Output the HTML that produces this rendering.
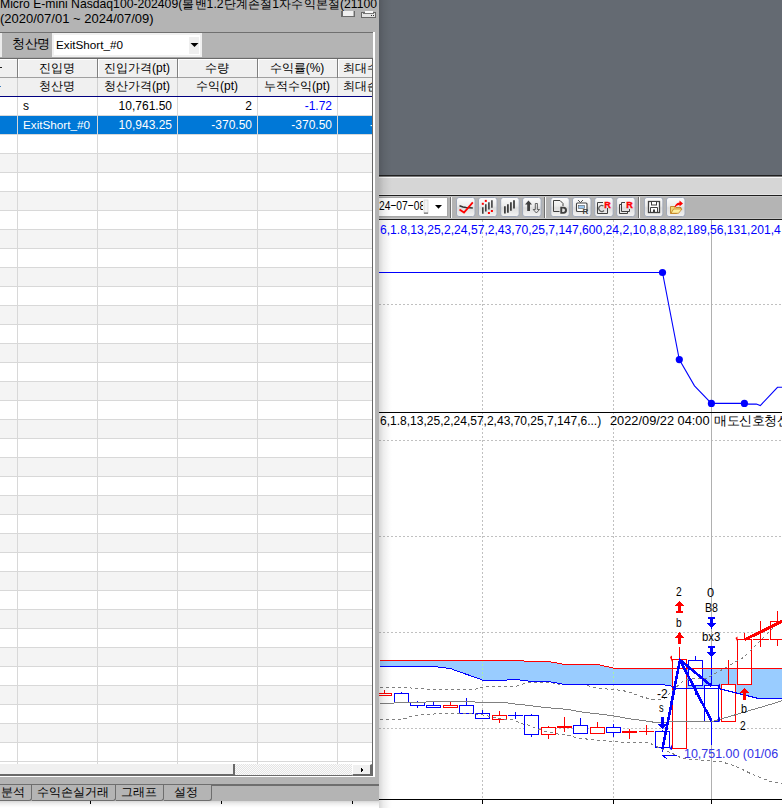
<!DOCTYPE html><html><head><meta charset="utf-8"><title>chart</title><style>
*{margin:0;padding:0;box-sizing:border-box}
html,body{width:782px;height:808px;overflow:hidden;background:#fff;font-family:"Liberation Sans",sans-serif;font-size:12px;color:#000}
#chart{position:absolute;left:0;top:0}
#win{position:absolute;left:0;top:0;width:379px;height:801px;background:#b4b4b4;overflow:hidden}
.t{position:absolute;white-space:nowrap;line-height:12px;height:12px}
.r{position:absolute}
.k{display:inline-block;width:1em;text-align:center}
</style></head><body>
<svg id="chart" width="782" height="808" viewBox="0 0 782 808"><rect x="379" y="0" width="403" height="175" fill="#646a72"/>
<rect x="379" y="175" width="403" height="1" fill="#202020"/>
<rect x="379" y="176" width="403" height="1" fill="#7a7a7a"/>
<rect x="379" y="177" width="403" height="1" fill="#f8f8f8"/>
<rect x="379" y="178" width="403" height="16" fill="#d6d6d6"/>
<rect x="379" y="194" width="403" height="1" fill="#e4e4e4"/>
<rect x="379" y="195" width="403" height="1" fill="#1e1e1e"/>
<rect x="379" y="196" width="403" height="1" fill="#c4c4c4"/>
<rect x="379" y="197" width="403" height="21" fill="#b4b4b4"/>
<rect x="379" y="218" width="403" height="1" fill="#c4c4c4"/>
<rect x="379" y="219" width="403" height="1" fill="#1e1e1e"/>
<rect x="379" y="220" width="403" height="588" fill="#ffffff"/>
<line x1="482.5" y1="220" x2="482.5" y2="799" stroke="#c0c0c0" stroke-width="1" stroke-dasharray="2,2" shape-rendering="crispEdges"/>
<line x1="613.5" y1="220" x2="613.5" y2="799" stroke="#c0c0c0" stroke-width="1" stroke-dasharray="2,2" shape-rendering="crispEdges"/>
<line x1="379" y1="304.5" x2="782" y2="304.5" stroke="#c0c0c0" stroke-width="1" stroke-dasharray="2,2" shape-rendering="crispEdges"/>
<line x1="379" y1="440.5" x2="782" y2="440.5" stroke="#c0c0c0" stroke-width="1" stroke-dasharray="2,2" shape-rendering="crispEdges"/>
<line x1="379" y1="536.5" x2="782" y2="536.5" stroke="#c0c0c0" stroke-width="1" stroke-dasharray="2,2" shape-rendering="crispEdges"/>
<line x1="379" y1="632.5" x2="782" y2="632.5" stroke="#c0c0c0" stroke-width="1" stroke-dasharray="2,2" shape-rendering="crispEdges"/>
<line x1="379" y1="728.5" x2="782" y2="728.5" stroke="#c0c0c0" stroke-width="1" stroke-dasharray="2,2" shape-rendering="crispEdges"/>
<line x1="711.5" y1="220" x2="711.5" y2="799" stroke="#b0b0b0" stroke-width="1" shape-rendering="crispEdges"/>
<rect x="379" y="412" width="403" height="1" fill="#000" shape-rendering="crispEdges"/>
<rect x="379" y="799" width="403" height="1" fill="#000" shape-rendering="crispEdges"/>
<rect x="90" y="800" width="1" height="4" fill="#000" shape-rendering="crispEdges"/>
<rect x="221" y="800" width="1" height="4" fill="#000" shape-rendering="crispEdges"/>
<rect x="352" y="800" width="1" height="4" fill="#000" shape-rendering="crispEdges"/>
<rect x="482" y="800" width="1" height="4" fill="#000" shape-rendering="crispEdges"/>
<rect x="613" y="800" width="1" height="4" fill="#000" shape-rendering="crispEdges"/>
<rect x="711" y="800" width="1" height="4" fill="#000" shape-rendering="crispEdges"/>
<polyline points="379,272.5 662.5,272.5 679.3,359.6 694.5,385.9 711.4,403.4 744.4,403.4 748.7,404.1 756.4,404.1 760.3,405.6 777.5,387.3 782,387.3" fill="none" stroke="#0000ff" stroke-width="1.1"/>
<circle cx="662.5" cy="272.5" r="3.6" fill="#0000ff"/>
<circle cx="679.3" cy="359.6" r="3.6" fill="#0000ff"/>
<circle cx="711.4" cy="403.4" r="3.6" fill="#0000ff"/>
<circle cx="744.4" cy="403.4" r="3.6" fill="#0000ff"/>
<polygon points="379.5,660.5 523.5,660.5 524.5,661.5 550.5,661.5 551.5,662.5 556.5,662.5 557.5,663.5 561.5,663.5 562.5,664.5 599.5,664.5 600.5,665.5 603.5,665.5 604.5,666.5 608.5,666.5 609.5,667.5 612.5,667.5 613.5,668.5 782.5,668.5 782.5,698.5 758.5,698.5 718.5,688.5 673.5,688.5 672.5,687.5 671.5,686.5 670.5,685.5 665.5,685.5 664.5,684.5 562.5,684.5 561.5,683.5 557.5,683.5 556.5,682.5 551.5,682.5 550.5,681.5 528.5,681.5 527.5,680.5 520.5,680.5 519.5,679.5 507.5,679.5 506.5,680.5 482.5,680.5 481.5,679.5 452.5,669.5 451.5,668.5 446.5,668.5 445.5,667.5 438.5,667.5 437.5,666.5 379.5,666.5" fill="#99ccff" shape-rendering="crispEdges"/>
<line x1="482.5" y1="661" x2="482.5" y2="680" stroke="#a8f0a8" stroke-width="1" stroke-dasharray="2,2" stroke-dashoffset="1" shape-rendering="crispEdges"/>
<line x1="613.5" y1="669" x2="613.5" y2="684" stroke="#a8f0a8" stroke-width="1" stroke-dasharray="2,2" stroke-dashoffset="1" shape-rendering="crispEdges"/>
<line x1="384.5" y1="690" x2="384.5" y2="693" stroke="#ff0000" stroke-width="1" shape-rendering="crispEdges"/>
<rect x="377.5" y="693.5" width="14" height="2" fill="#fff" stroke="#ff0000" stroke-width="1" shape-rendering="crispEdges"/>
<line x1="401.5" y1="692" x2="401.5" y2="693" stroke="#0000ff" stroke-width="1" shape-rendering="crispEdges"/>
<rect x="394.5" y="693.5" width="14" height="9" fill="#fff" stroke="#0000ff" stroke-width="1" shape-rendering="crispEdges"/>
<line x1="417.5" y1="701" x2="417.5" y2="702" stroke="#0000ff" stroke-width="1" shape-rendering="crispEdges"/>
<line x1="417.5" y1="706" x2="417.5" y2="708" stroke="#0000ff" stroke-width="1" shape-rendering="crispEdges"/>
<rect x="410.5" y="702.5" width="14" height="3" fill="#fff" stroke="#0000ff" stroke-width="1" shape-rendering="crispEdges"/>
<line x1="433.5" y1="701" x2="433.5" y2="705" stroke="#0000ff" stroke-width="1" shape-rendering="crispEdges"/>
<rect x="426.5" y="705.5" width="14" height="2" fill="#fff" stroke="#0000ff" stroke-width="1" shape-rendering="crispEdges"/>
<line x1="450.5" y1="701" x2="450.5" y2="705" stroke="#ff0000" stroke-width="1" shape-rendering="crispEdges"/>
<rect x="443.5" y="705.5" width="14" height="2" fill="#fff" stroke="#ff0000" stroke-width="1" shape-rendering="crispEdges"/>
<line x1="466.5" y1="698" x2="466.5" y2="705" stroke="#0000ff" stroke-width="1" shape-rendering="crispEdges"/>
<rect x="459.5" y="705.5" width="14" height="8" fill="#fff" stroke="#0000ff" stroke-width="1" shape-rendering="crispEdges"/>
<line x1="482.5" y1="710" x2="482.5" y2="713" stroke="#0000ff" stroke-width="1" shape-rendering="crispEdges"/>
<rect x="475.5" y="713.5" width="14" height="5" fill="#fff" stroke="#0000ff" stroke-width="1" shape-rendering="crispEdges"/>
<line x1="499.5" y1="711" x2="499.5" y2="715" stroke="#ff0000" stroke-width="1" shape-rendering="crispEdges"/>
<line x1="499.5" y1="720" x2="499.5" y2="723" stroke="#ff0000" stroke-width="1" shape-rendering="crispEdges"/>
<rect x="492.5" y="715.5" width="14" height="4" fill="#fff" stroke="#ff0000" stroke-width="1" shape-rendering="crispEdges"/>
<rect x="508" y="715" width="15" height="1" fill="#0000ff" shape-rendering="crispEdges"/>
<line x1="515.5" y1="712" x2="515.5" y2="719" stroke="#0000ff" stroke-width="1" shape-rendering="crispEdges"/>
<line x1="531.5" y1="714" x2="531.5" y2="715" stroke="#0000ff" stroke-width="1" shape-rendering="crispEdges"/>
<line x1="531.5" y1="735" x2="531.5" y2="737" stroke="#0000ff" stroke-width="1" shape-rendering="crispEdges"/>
<rect x="524.5" y="715.5" width="14" height="19" fill="#fff" stroke="#0000ff" stroke-width="1" shape-rendering="crispEdges"/>
<line x1="548.5" y1="726" x2="548.5" y2="727" stroke="#ff0000" stroke-width="1" shape-rendering="crispEdges"/>
<line x1="548.5" y1="735" x2="548.5" y2="739" stroke="#ff0000" stroke-width="1" shape-rendering="crispEdges"/>
<rect x="541.5" y="727.5" width="14" height="7" fill="#fff" stroke="#ff0000" stroke-width="1" shape-rendering="crispEdges"/>
<rect x="557" y="726" width="15" height="2" fill="#ff0000" shape-rendering="crispEdges"/>
<line x1="564.5" y1="717" x2="564.5" y2="732" stroke="#ff0000" stroke-width="1" shape-rendering="crispEdges"/>
<line x1="580.5" y1="718" x2="580.5" y2="725" stroke="#0000ff" stroke-width="1" shape-rendering="crispEdges"/>
<rect x="573.5" y="725.5" width="14" height="8" fill="#fff" stroke="#0000ff" stroke-width="1" shape-rendering="crispEdges"/>
<line x1="597.5" y1="722" x2="597.5" y2="727" stroke="#ff0000" stroke-width="1" shape-rendering="crispEdges"/>
<rect x="590.5" y="727.5" width="14" height="6" fill="#fff" stroke="#ff0000" stroke-width="1" shape-rendering="crispEdges"/>
<line x1="613.5" y1="724" x2="613.5" y2="727" stroke="#0000ff" stroke-width="1" shape-rendering="crispEdges"/>
<line x1="613.5" y1="733" x2="613.5" y2="737" stroke="#0000ff" stroke-width="1" shape-rendering="crispEdges"/>
<rect x="606.5" y="727.5" width="14" height="5" fill="#fff" stroke="#0000ff" stroke-width="1" shape-rendering="crispEdges"/>
<rect x="622" y="731" width="15" height="2" fill="#ff0000" shape-rendering="crispEdges"/>
<line x1="629.5" y1="729" x2="629.5" y2="739" stroke="#ff0000" stroke-width="1" shape-rendering="crispEdges"/>
<rect x="639" y="731" width="15" height="1" fill="#ff0000" shape-rendering="crispEdges"/>
<line x1="646.5" y1="725" x2="646.5" y2="735" stroke="#ff0000" stroke-width="1" shape-rendering="crispEdges"/>
<line x1="662.5" y1="730" x2="662.5" y2="731" stroke="#0000ff" stroke-width="1" shape-rendering="crispEdges"/>
<line x1="662.5" y1="748" x2="662.5" y2="752" stroke="#0000ff" stroke-width="1" shape-rendering="crispEdges"/>
<rect x="655.5" y="731.5" width="14" height="16" fill="#fff" stroke="#0000ff" stroke-width="1" shape-rendering="crispEdges"/>
<line x1="679.5" y1="647" x2="679.5" y2="659" stroke="#ff0000" stroke-width="1" shape-rendering="crispEdges"/>
<rect x="672.5" y="659.5" width="14" height="89" fill="#fff" stroke="#ff0000" stroke-width="1" shape-rendering="crispEdges"/>
<line x1="695.5" y1="656" x2="695.5" y2="660" stroke="#0000ff" stroke-width="1" shape-rendering="crispEdges"/>
<line x1="695.5" y1="686" x2="695.5" y2="695" stroke="#0000ff" stroke-width="1" shape-rendering="crispEdges"/>
<rect x="688.5" y="660.5" width="14" height="25" fill="#fff" stroke="#0000ff" stroke-width="1" shape-rendering="crispEdges"/>
<line x1="711.5" y1="658" x2="711.5" y2="685" stroke="#0000ff" stroke-width="1" shape-rendering="crispEdges"/>
<line x1="711.5" y1="722" x2="711.5" y2="745" stroke="#0000ff" stroke-width="1" shape-rendering="crispEdges"/>
<rect x="704.5" y="685.5" width="14" height="36" fill="#fff" stroke="#0000ff" stroke-width="1" shape-rendering="crispEdges"/>
<line x1="728.5" y1="660" x2="728.5" y2="684" stroke="#ff0000" stroke-width="1" shape-rendering="crispEdges"/>
<rect x="721.5" y="684.5" width="14" height="37" fill="#fff" stroke="#ff0000" stroke-width="1" shape-rendering="crispEdges"/>
<line x1="744.5" y1="633" x2="744.5" y2="639" stroke="#ff0000" stroke-width="1" shape-rendering="crispEdges"/>
<rect x="737.5" y="639.5" width="14" height="45" fill="#fff" stroke="#ff0000" stroke-width="1" shape-rendering="crispEdges"/>
<rect x="753" y="639" width="16" height="1" fill="#ff0000" shape-rendering="crispEdges"/>
<line x1="760.5" y1="621" x2="760.5" y2="647" stroke="#ff0000" stroke-width="1" shape-rendering="crispEdges"/>
<line x1="777.5" y1="611" x2="777.5" y2="621" stroke="#ff0000" stroke-width="1" shape-rendering="crispEdges"/>
<line x1="777.5" y1="640" x2="777.5" y2="646" stroke="#ff0000" stroke-width="1" shape-rendering="crispEdges"/>
<rect x="770.5" y="621.5" width="20" height="18" fill="#fff" stroke="#ff0000" stroke-width="1" shape-rendering="crispEdges"/>
<polyline points="379.5,687.5 410.5,687.5 411.5,688.5 425.5,688.5 426.5,689.5 474.5,689.5 480.5,687.5 485.5,686.5 515.5,686.5 520.5,684.5 530.5,682.5 550.5,682.5 560.5,684.5 583.5,684.5 590.5,686.5 600.5,688.5 613.5,689.5 622.5,690.5 630.5,692.5 640.5,696.5 652.5,699.5 663.5,699.5 672.5,690.5 683.5,680.5 690.5,678.5 706.5,678.5 743.5,657.5 782.5,618.5" fill="none" stroke="#808080" stroke-width="1" stroke-dasharray="3,3" shape-rendering="crispEdges"/>
<polyline points="379.5,703.5 393.5,703.5 394.5,702.5 425.5,702.5 426.5,701.5 474.5,701.5 475.5,702.5 507.5,702.5 508.5,703.5 520.5,704.5 528.5,705.5 536.5,706.5 544.5,707.5 557.5,708.5 567.5,709.5 573.5,710.5 578.5,711.5 585.5,712.5 593.5,713.5 603.5,714.5 610.5,715.5 616.5,716.5 622.5,717.5 627.5,718.5 634.5,719.5 642.5,720.5 649.5,721.5 655.5,722.5 665.5,722.5 671.5,721.5 712.5,721.5 773.5,703.5 782.5,700.5" fill="none" stroke="#808080" stroke-width="1" shape-rendering="crispEdges"/>
<polyline points="379.5,719.5 395.5,719.5 405.5,718.5 410.5,716.5 415.5,715.5 423.5,714.5 445.5,713.5 470.5,713.5 480.5,714.5 490.5,716.5 506.5,719.5 512.5,719.5 515.5,720.5 520.5,723.5 530.5,725.5 535.5,728.5 540.5,729.5 545.5,731.5 550.5,732.5 560.5,734.5 569.5,735.5 575.5,737.5 582.5,738.5 590.5,739.5 600.5,740.5 617.5,741.5 620.5,742.5 648.5,742.5 652.5,744.5 660.5,748.5 670.5,752.5 680.5,757.5 690.5,759.5 720.5,761.5 730.5,764.5 740.5,768.5 750.5,773.5 760.5,777.5 770.5,781.5 782.5,783.5" fill="none" stroke="#808080" stroke-width="1" stroke-dasharray="3,3" shape-rendering="crispEdges"/>
<polyline points="379.5,660.5 523.5,660.5 524.5,661.5 550.5,661.5 551.5,662.5 556.5,662.5 557.5,663.5 561.5,663.5 562.5,664.5 599.5,664.5 600.5,665.5 603.5,665.5 604.5,666.5 608.5,666.5 609.5,667.5 612.5,667.5 613.5,668.5 782.5,668.5" fill="none" stroke="#ff0000" stroke-width="1" shape-rendering="crispEdges"/>
<polyline points="379.5,666.5 437.5,666.5 438.5,667.5 445.5,667.5 446.5,668.5 451.5,668.5 452.5,669.5 481.5,679.5 482.5,680.5 506.5,680.5 507.5,679.5 519.5,679.5 520.5,680.5 527.5,680.5 528.5,681.5 550.5,681.5 551.5,682.5 556.5,682.5 557.5,683.5 561.5,683.5 562.5,684.5 664.5,684.5 665.5,685.5 670.5,685.5 671.5,686.5 672.5,687.5 673.5,688.5 718.5,688.5 758.5,698.5 782.5,698.5" fill="none" stroke="#0000ff" stroke-width="1" shape-rendering="crispEdges"/>
<polyline points="662.5,749 680,660 711.5,686" fill="none" stroke="#0000ff" stroke-width="2.6" stroke-linejoin="miter" shape-rendering="crispEdges"/>
<line x1="680" y1="660" x2="711.5" y2="721" stroke="#0000ff" stroke-width="2.6" shape-rendering="crispEdges"/>
<line x1="745" y1="639.5" x2="790" y2="617.5" stroke="#ff0000" stroke-width="3" shape-rendering="crispEdges"/>
<polygon points="675,606 679.5,601 684,606" fill="#ff0000" shape-rendering="crispEdges"/>
<rect x="678" y="606" width="3" height="7" fill="#ff0000" shape-rendering="crispEdges"/>
<rect x="676" y="611" width="7" height="2" fill="#ff0000" shape-rendering="crispEdges"/>
<polygon points="675,638 679.5,632 684,638" fill="#ff0000" shape-rendering="crispEdges"/>
<rect x="678" y="638" width="3" height="6" fill="#ff0000" shape-rendering="crispEdges"/>
<polygon points="707,623 711.5,628.6 716,623" fill="#0000ff" shape-rendering="crispEdges"/>
<rect x="710" y="617" width="3" height="6" fill="#0000ff" shape-rendering="crispEdges"/>
<rect x="708" y="617" width="7" height="2" fill="#0000ff" shape-rendering="crispEdges"/>
<polygon points="707,652 711.5,657.7 716,652" fill="#0000ff" shape-rendering="crispEdges"/>
<rect x="710" y="646" width="3" height="6" fill="#0000ff" shape-rendering="crispEdges"/>
<rect x="708" y="646" width="7" height="2" fill="#0000ff" shape-rendering="crispEdges"/>
<polygon points="658,724 662.5,729 667,724" fill="#0000ff" shape-rendering="crispEdges"/>
<rect x="661" y="717" width="3" height="7" fill="#0000ff" shape-rendering="crispEdges"/>
<polygon points="740,693 744.5,688 749,693" fill="#ff0000" shape-rendering="crispEdges"/>
<rect x="743" y="693" width="3" height="7" fill="#ff0000" shape-rendering="crispEdges"/>
<polygon points="670,657 672,655.5 672,662" fill="#ff0000"/>
<polygon points="735.5,638 737.5,636.5 737.5,642" fill="#ff0000"/>
<polygon points="669.5,749 672,744.5 672,750" fill="#0000ff"/>
<polygon points="717.5,686 720,683.5 720,689" fill="#0000ff"/>
<polygon points="717.5,720 720,716.5 720,722" fill="#0000ff"/>
<rect x="662" y="755" width="15" height="1" fill="#0000ff" shape-rendering="crispEdges"/>
<line x1="662.5" y1="755.5" x2="667" y2="759" stroke="#0000ff" stroke-width="1" shape-rendering="crispEdges"/>
<defs><linearGradient id="bg1" x1="0" y1="0" x2="0" y2="1"><stop offset="0" stop-color="#fdfdfd"/><stop offset="0.45" stop-color="#ececec"/><stop offset="0.55" stop-color="#dedede"/><stop offset="1" stop-color="#f4f4f4"/></linearGradient></defs>
<rect x="378.5" y="197.5" width="69" height="19" fill="#fff" stroke="#a8a8a8" stroke-width="1"/>
<rect x="424" y="200" width="4" height="13.5" fill="#f4f4f4" stroke="#c8c8c8" stroke-width="0.6"/>
<rect x="424" y="212.5" width="4" height="1.2" fill="#707070"/>
<polygon points="435,205 442,205 438.5,208.8" fill="#000"/>
<rect x="450" y="197" width="1" height="21" fill="#707070" shape-rendering="crispEdges"/><rect x="451" y="197" width="1" height="21" fill="#f8f8f8" shape-rendering="crispEdges"/>
<rect x="544" y="197" width="1" height="21" fill="#707070" shape-rendering="crispEdges"/><rect x="545" y="197" width="1" height="21" fill="#f8f8f8" shape-rendering="crispEdges"/>
<rect x="638" y="197" width="1" height="21" fill="#707070" shape-rendering="crispEdges"/><rect x="639" y="197" width="1" height="21" fill="#f8f8f8" shape-rendering="crispEdges"/>
<rect x="456.5" y="197.5" width="18.5" height="19" rx="2.5" fill="url(#bg1)" stroke="#a0a8b8" stroke-width="1"/>
<rect x="478.5" y="197.5" width="18.5" height="19" rx="2.5" fill="url(#bg1)" stroke="#a0a8b8" stroke-width="1"/>
<rect x="500.7" y="197.5" width="18.5" height="19" rx="2.5" fill="url(#bg1)" stroke="#a0a8b8" stroke-width="1"/>
<rect x="522.6" y="197.5" width="18.5" height="19" rx="2.5" fill="url(#bg1)" stroke="#a0a8b8" stroke-width="1"/>
<rect x="550.8" y="197.5" width="18.5" height="19" rx="2.5" fill="url(#bg1)" stroke="#a0a8b8" stroke-width="1"/>
<rect x="572.5" y="197.5" width="18.5" height="19" rx="2.5" fill="url(#bg1)" stroke="#a0a8b8" stroke-width="1"/>
<rect x="594.7" y="197.5" width="18.5" height="19" rx="2.5" fill="url(#bg1)" stroke="#a0a8b8" stroke-width="1"/>
<rect x="616.6" y="197.5" width="18.5" height="19" rx="2.5" fill="url(#bg1)" stroke="#a0a8b8" stroke-width="1"/>
<rect x="644.4" y="197.5" width="18.5" height="19" rx="2.5" fill="url(#bg1)" stroke="#a0a8b8" stroke-width="1"/>
<rect x="666.5" y="197.5" width="18.5" height="19" rx="2.5" fill="url(#bg1)" stroke="#a0a8b8" stroke-width="1"/>
<polyline points="459.5,205.8 463,207 466,207.5 472.8,208" fill="none" stroke="#333" stroke-width="1.6"/>
<polyline points="459.5,209.5 464,212.5 472.8,202.3" fill="none" stroke="#ff0000" stroke-width="1.8"/>
<line x1="482.8" y1="207.2" x2="482.8" y2="213.7" stroke="#404040" stroke-width="1.6"/>
<line x1="485.8" y1="204.3" x2="485.8" y2="211.5" stroke="#404040" stroke-width="1.6"/>
<line x1="488.9" y1="202.2" x2="488.9" y2="209.6" stroke="#404040" stroke-width="1.6"/>
<line x1="491.9" y1="200.2" x2="491.9" y2="207.8" stroke="#404040" stroke-width="1.6"/>
<rect x="481.8" y="202.8" width="2" height="2" fill="#ff0000"/>
<rect x="484.8" y="199.9" width="2" height="2" fill="#ff0000"/>
<rect x="487.9" y="212" width="2" height="2" fill="#ff0000"/>
<rect x="490.9" y="210" width="2" height="2" fill="#ff0000"/>
<line x1="504.9" y1="206.3" x2="504.9" y2="213.6" stroke="#404040" stroke-width="1.8"/>
<line x1="507.9" y1="204.2" x2="507.9" y2="212.8" stroke="#404040" stroke-width="1.8"/>
<line x1="510.9" y1="202.2" x2="510.9" y2="210.8" stroke="#404040" stroke-width="1.8"/>
<line x1="514" y1="200.2" x2="514" y2="208.5" stroke="#404040" stroke-width="1.8"/>
<polygon points="525,204.5 528.5,200.5 532,204.5 530,204.5 530,211 527.2,211 527.2,204.5" fill="#404040"/>
<polygon points="535.3,203.5 537.4,203.5 537.4,209.5 539.5,209.5 536.4,213 533.2,209.5 535.3,209.5" fill="none" stroke="#404040" stroke-width="0.8"/>
<path d="M553.5,200.5 H560 L563,203.5 V206 M553.5,200.5 V211.5 H559.5" fill="none" stroke="#404040" stroke-width="1"/>
<path d="M560.3,206.8 H563.5 Q567,207 567,210.3 Q567,213.6 563.5,213.7 H560.3 Z M562.2,208.6 V211.9 H563.3 Q565,211.8 565,210.3 Q565,208.7 563.3,208.6 Z" fill="#404040" fill-rule="evenodd"/>
<line x1="578" y1="200" x2="580.5" y2="202.5" stroke="#404040" stroke-width="0.9"/><line x1="583" y1="200" x2="580.5" y2="202.5" stroke="#404040" stroke-width="0.9"/>
<rect x="576.5" y="203" width="10.5" height="8.5" rx="1" fill="#fff" stroke="#404040" stroke-width="1.1"/>
<rect x="578.5" y="205.5" width="6" height="3" fill="#9cc8f0" stroke="#404040" stroke-width="0.5"/>
<text x="582.5" y="213.8" font-family="Liberation Sans" font-weight="bold" font-size="8" fill="#404040">R</text>
<path d="M603,202.5 H597.5 V213.5 H607.5 V208" fill="none" stroke="#404040" stroke-width="1"/>
<path d="M603.5,206 A3,3 0 1 0 604,210.5" fill="none" stroke="#606060" stroke-width="1.2"/>
<text x="604.3" y="207.8" font-family="Liberation Sans" font-weight="bold" font-size="9" fill="#ff0000" stroke="#ff0000" stroke-width="0.4">R</text>
<path d="M625,202.5 H621.5 V211.5 H629.5 V209" fill="none" stroke="#404040" stroke-width="1"/>
<path d="M621.5,204.5 H619.5 V213.5 H627.5 V211.5" fill="none" stroke="#404040" stroke-width="1"/>
<text x="626.3" y="207.8" font-family="Liberation Sans" font-weight="bold" font-size="9" fill="#ff0000" stroke="#ff0000" stroke-width="0.4">R</text>
<rect x="648.5" y="201.5" width="11" height="11" fill="#fff" stroke="#404040" stroke-width="1.3"/>
<rect x="651.5" y="201.5" width="5" height="3.5" fill="#fff" stroke="#404040" stroke-width="1"/>
<path d="M650.5,212.5 V207.5 H657.5 V212.5" fill="none" stroke="#404040" stroke-width="1"/>
<rect x="653" y="209.5" width="2" height="3" fill="#404040"/>
<path d="M670.5,206.5 H675 L676,207.5 H681 V209 L676.5,213.5 H670.5 Z" fill="#f0d878" stroke="#c08020" stroke-width="0.9"/>
<path d="M671,213.3 L673.5,209 H682 L678.5,213.3 Z" fill="#fff0a0" stroke="#c08020" stroke-width="0.8"/>
<path d="M674.5,208 Q675,203 679.5,202.5 V200.5 L683,203.5 L679.5,206.5 V204.8 Q676.5,205 674.5,208 Z" fill="#ff0000"/></svg>
<div class="r" style="left:0;top:801px;width:379px;height:7px;background:linear-gradient(to bottom,rgba(0,0,0,0.16),rgba(0,0,0,0.07) 35%,rgba(0,0,0,0.02) 75%,rgba(0,0,0,0))"></div>
<div class="r" style="left:379px;top:0;width:13px;height:808px;background:linear-gradient(to right,rgba(0,0,0,0.16),rgba(0,0,0,0.07) 35%,rgba(0,0,0,0.02) 75%,rgba(0,0,0,0))"></div>
<div class="r" style="left:379px;top:197px;width:44px;height:19px;overflow:hidden"><div class="t" style="left:-0.30px;top:2.12px;font-size:13.5px;line-height:13.5px;height:13.5px;color:#000;transform:scaleX(0.7576);transform-origin:0 0;">24−07−08</div></div>
<div class="t" style="left:379.80px;top:223.67px;font-size:12.5px;line-height:12.5px;height:12.5px;color:#0000ff;transform:scaleX(0.9690);transform-origin:0 0;">6,1.8,13,25,2,24,57,2,43,70,25,7,147,600,24,2,10,8,8,82,189,56,131,201,4</div>
<div class="t" style="left:380.00px;top:415.07px;font-size:12.5px;line-height:12.5px;height:12.5px;color:#000;transform:scaleX(0.9615);transform-origin:0 0;">6,1.8,13,25,2,24,57,2,43,70,25,7,147,6...)</div>
<div class="t" style="left:610.40px;top:415.07px;font-size:12.5px;line-height:12.5px;height:12.5px;color:#000;transform:scaleX(1.0235);transform-origin:0 0;">2022/09/22 04:00</div>
<div class="t" style="left:714.00px;top:415.07px;font-size:12.5px;line-height:12.5px;height:12.5px;color:#000;"><span class="k">매</span><span class="k">도</span><span class="k">신</span><span class="k">호</span><span class="k">청</span><span class="k">산</span></div>
<div class="t" style="left:675.60px;top:586.07px;font-size:12.5px;line-height:12.5px;height:12.5px;color:#000;transform:scaleX(0.8216);transform-origin:0 0;">2</div>
<div class="t" style="left:706.90px;top:587.17px;font-size:12.5px;line-height:12.5px;height:12.5px;color:#000;transform:scaleX(1.0234);transform-origin:0 0;">0</div>
<div class="t" style="left:704.80px;top:602.27px;font-size:12.5px;line-height:12.5px;height:12.5px;color:#000;transform:scaleX(0.8490);transform-origin:0 0;">B8</div>
<div class="t" style="left:675.70px;top:616.88px;font-size:12.5px;line-height:12.5px;height:12.5px;color:#000;transform:scaleX(0.8072);transform-origin:0 0;">b</div>
<div class="t" style="left:701.80px;top:630.68px;font-size:12.5px;line-height:12.5px;height:12.5px;color:#000;transform:scaleX(0.9143);transform-origin:0 0;">bx3</div>
<div class="t" style="left:656.90px;top:687.57px;font-size:12.5px;line-height:12.5px;height:12.5px;color:#000;transform:scaleX(0.9618);transform-origin:0 0;">-2</div>
<div class="t" style="left:659.40px;top:702.41px;font-size:12.5px;line-height:12.5px;height:12.5px;color:#000;transform:scaleX(0.7360);transform-origin:0 0;">s</div>
<div class="t" style="left:740.50px;top:702.68px;font-size:12.5px;line-height:12.5px;height:12.5px;color:#000;transform:scaleX(0.8649);transform-origin:0 0;">b</div>
<div class="t" style="left:740.40px;top:720.17px;font-size:12.5px;line-height:12.5px;height:12.5px;color:#000;transform:scaleX(0.8216);transform-origin:0 0;">2</div>
<div class="t" style="left:683.50px;top:748.44px;font-size:12.5px;line-height:12.5px;height:12.5px;color:#3232e6;transform:scaleX(0.9958);transform-origin:0 0;">10,751.00 (01/06</div>
<div id="win"><div class="t" style="left:0px;top:-1.9px;font-size:12.2px;color:#000;">Micro E-mini Nasdaq100-202409(<span class="k">볼</span><span class="k">밴</span>1.2<span class="k">단</span><span class="k">계</span><span class="k">손</span><span class="k">절</span>1<span class="k">자</span><span class="k">수</span><span class="k">익</span><span class="k">본</span><span class="k">절</span>(21100</div>
<div class="t" style="left:0px;top:13px;font-size:13px;color:#000;">(2020/07/01 ~ 2024/07/09)</div>
<svg class="r" style="left:338px;top:8px" width="42" height="14" viewBox="338 8 42 14" shape-rendering="crispEdges"><rect x="341" y="11" width="1.5" height="5.5" fill="#6a6a6a"/><rect x="353.5" y="11" width="1.5" height="5.5" fill="#6a6a6a"/><rect x="343" y="10.8" width="10" height="5.7" fill="#f0f0f0"/><rect x="342" y="16" width="12" height="1" fill="#6a6a6a"/><rect x="361.5" y="12.5" width="14" height="5" rx="1" fill="#e4e4e4" stroke="#666" stroke-width="1"/><rect x="364.5" y="10.8" width="8" height="2.2" fill="#f8f8f8"/><rect x="363" y="13" width="11" height="1" fill="#777"/><rect x="371" y="15" width="1.2" height="1.2" fill="#333"/><rect x="373" y="15" width="1.2" height="1.2" fill="#333"/></svg>
<div class="r" style="left:0px;top:32px;width:374px;height:1px;background:#707070;"></div>
<div class="r" style="left:373px;top:32px;width:2px;height:745px;background:#ffffff;"></div>
<div class="r" style="left:372px;top:58px;width:1px;height:718px;background:#666666;"></div>
<div class="r" style="left:0px;top:776px;width:375px;height:1px;background:#ffffff;"></div>
<div class="r" style="left:0px;top:33px;width:2px;height:24px;background:#ececec;"></div>
<div class="t" style="left:12px;top:37.5px;font-size:12.5px;color:#000;"><span class="k">청</span><span class="k">산</span><span class="k">명</span></div>
<div class="r" style="left:52px;top:33px;width:150px;height:24px;background:#ffffff;border:2px solid #f0f0f0"></div>
<div class="t" style="left:56px;top:38.5px;font-size:11.7px;color:#000;">ExitShort_#0</div>
<div class="r" style="left:189px;top:37px;width:10px;height:17px;background:#efefef;"></div>
<svg class="r" style="left:190px;top:42px" width="9" height="6"><polygon points="0.5,1 8.5,1 4.5,5" fill="#000"/></svg>
<div class="r" style="left:0px;top:57px;width:373px;height:1px;background:#a8a8a8;"></div>
<div class="r" style="left:0px;top:58px;width:372px;height:705px;background:#ffffff;"></div>
<div class="r" style="left:0px;top:58px;width:372px;height:1px;background:#6a6a6a;"></div>
<div class="r" style="left:0px;top:59px;width:372px;height:1px;background:#ffffff;"></div>
<div class="r" style="left:0px;top:60px;width:372px;height:17px;background:#f0f0f0;"></div>
<div class="r" style="left:0px;top:77px;width:372px;height:1px;background:#a0a0a0;"></div>
<div class="r" style="left:0px;top:78px;width:372px;height:18px;background:#f0f0f0;"></div>
<div class="r" style="left:17px;top:59px;width:1px;height:19px;background:#808080;"></div>
<div class="r" style="left:18px;top:59px;width:1px;height:18px;background:#ffffff;"></div>
<div class="r" style="left:17px;top:78px;width:1px;height:18px;background:#d0d0d0;"></div>
<div class="r" style="left:97px;top:59px;width:1px;height:19px;background:#808080;"></div>
<div class="r" style="left:98px;top:59px;width:1px;height:18px;background:#ffffff;"></div>
<div class="r" style="left:97px;top:78px;width:1px;height:18px;background:#d0d0d0;"></div>
<div class="r" style="left:177px;top:59px;width:1px;height:19px;background:#808080;"></div>
<div class="r" style="left:178px;top:59px;width:1px;height:18px;background:#ffffff;"></div>
<div class="r" style="left:177px;top:78px;width:1px;height:18px;background:#d0d0d0;"></div>
<div class="r" style="left:257px;top:59px;width:1px;height:19px;background:#808080;"></div>
<div class="r" style="left:258px;top:59px;width:1px;height:18px;background:#ffffff;"></div>
<div class="r" style="left:257px;top:78px;width:1px;height:18px;background:#d0d0d0;"></div>
<div class="r" style="left:337px;top:59px;width:1px;height:19px;background:#808080;"></div>
<div class="r" style="left:338px;top:59px;width:1px;height:18px;background:#ffffff;"></div>
<div class="r" style="left:337px;top:78px;width:1px;height:18px;background:#d0d0d0;"></div>
<div class="r" style="left:0px;top:96px;width:372px;height:1px;background:#000080;"></div>
<div class="r" style="left:0px;top:97px;width:372px;height:18px;background:#ffffff;"></div>
<div class="r" style="left:0px;top:115px;width:372px;height:1px;background:#d8d8d8;"></div>
<div class="r" style="left:0px;top:116px;width:372px;height:18px;background:#0078d7;"></div>
<div class="r" style="left:0px;top:134px;width:372px;height:1px;background:#d8d8d8;"></div>
<div class="r" style="left:0px;top:135px;width:372px;height:18px;background:#ffffff;"></div>
<div class="r" style="left:0px;top:153px;width:372px;height:1px;background:#d8d8d8;"></div>
<div class="r" style="left:0px;top:154px;width:372px;height:18px;background:#f4f4f4;"></div>
<div class="r" style="left:0px;top:172px;width:372px;height:1px;background:#d8d8d8;"></div>
<div class="r" style="left:0px;top:173px;width:372px;height:18px;background:#ffffff;"></div>
<div class="r" style="left:0px;top:191px;width:372px;height:1px;background:#d8d8d8;"></div>
<div class="r" style="left:0px;top:192px;width:372px;height:18px;background:#f4f4f4;"></div>
<div class="r" style="left:0px;top:210px;width:372px;height:1px;background:#d8d8d8;"></div>
<div class="r" style="left:0px;top:211px;width:372px;height:18px;background:#ffffff;"></div>
<div class="r" style="left:0px;top:229px;width:372px;height:1px;background:#d8d8d8;"></div>
<div class="r" style="left:0px;top:230px;width:372px;height:18px;background:#f4f4f4;"></div>
<div class="r" style="left:0px;top:248px;width:372px;height:1px;background:#d8d8d8;"></div>
<div class="r" style="left:0px;top:249px;width:372px;height:18px;background:#ffffff;"></div>
<div class="r" style="left:0px;top:267px;width:372px;height:1px;background:#d8d8d8;"></div>
<div class="r" style="left:0px;top:268px;width:372px;height:18px;background:#f4f4f4;"></div>
<div class="r" style="left:0px;top:286px;width:372px;height:1px;background:#d8d8d8;"></div>
<div class="r" style="left:0px;top:287px;width:372px;height:18px;background:#ffffff;"></div>
<div class="r" style="left:0px;top:305px;width:372px;height:1px;background:#d8d8d8;"></div>
<div class="r" style="left:0px;top:306px;width:372px;height:18px;background:#f4f4f4;"></div>
<div class="r" style="left:0px;top:324px;width:372px;height:1px;background:#d8d8d8;"></div>
<div class="r" style="left:0px;top:325px;width:372px;height:18px;background:#ffffff;"></div>
<div class="r" style="left:0px;top:343px;width:372px;height:1px;background:#d8d8d8;"></div>
<div class="r" style="left:0px;top:344px;width:372px;height:18px;background:#f4f4f4;"></div>
<div class="r" style="left:0px;top:362px;width:372px;height:1px;background:#d8d8d8;"></div>
<div class="r" style="left:0px;top:363px;width:372px;height:18px;background:#ffffff;"></div>
<div class="r" style="left:0px;top:381px;width:372px;height:1px;background:#d8d8d8;"></div>
<div class="r" style="left:0px;top:382px;width:372px;height:18px;background:#f4f4f4;"></div>
<div class="r" style="left:0px;top:400px;width:372px;height:1px;background:#d8d8d8;"></div>
<div class="r" style="left:0px;top:401px;width:372px;height:18px;background:#ffffff;"></div>
<div class="r" style="left:0px;top:419px;width:372px;height:1px;background:#d8d8d8;"></div>
<div class="r" style="left:0px;top:420px;width:372px;height:18px;background:#f4f4f4;"></div>
<div class="r" style="left:0px;top:438px;width:372px;height:1px;background:#d8d8d8;"></div>
<div class="r" style="left:0px;top:439px;width:372px;height:18px;background:#ffffff;"></div>
<div class="r" style="left:0px;top:457px;width:372px;height:1px;background:#d8d8d8;"></div>
<div class="r" style="left:0px;top:458px;width:372px;height:18px;background:#f4f4f4;"></div>
<div class="r" style="left:0px;top:476px;width:372px;height:1px;background:#d8d8d8;"></div>
<div class="r" style="left:0px;top:477px;width:372px;height:18px;background:#ffffff;"></div>
<div class="r" style="left:0px;top:495px;width:372px;height:1px;background:#d8d8d8;"></div>
<div class="r" style="left:0px;top:496px;width:372px;height:18px;background:#f4f4f4;"></div>
<div class="r" style="left:0px;top:514px;width:372px;height:1px;background:#d8d8d8;"></div>
<div class="r" style="left:0px;top:515px;width:372px;height:18px;background:#ffffff;"></div>
<div class="r" style="left:0px;top:533px;width:372px;height:1px;background:#d8d8d8;"></div>
<div class="r" style="left:0px;top:534px;width:372px;height:18px;background:#f4f4f4;"></div>
<div class="r" style="left:0px;top:552px;width:372px;height:1px;background:#d8d8d8;"></div>
<div class="r" style="left:0px;top:553px;width:372px;height:18px;background:#ffffff;"></div>
<div class="r" style="left:0px;top:571px;width:372px;height:1px;background:#d8d8d8;"></div>
<div class="r" style="left:0px;top:572px;width:372px;height:18px;background:#f4f4f4;"></div>
<div class="r" style="left:0px;top:590px;width:372px;height:1px;background:#d8d8d8;"></div>
<div class="r" style="left:0px;top:591px;width:372px;height:18px;background:#ffffff;"></div>
<div class="r" style="left:0px;top:609px;width:372px;height:1px;background:#d8d8d8;"></div>
<div class="r" style="left:0px;top:610px;width:372px;height:18px;background:#f4f4f4;"></div>
<div class="r" style="left:0px;top:628px;width:372px;height:1px;background:#d8d8d8;"></div>
<div class="r" style="left:0px;top:629px;width:372px;height:18px;background:#ffffff;"></div>
<div class="r" style="left:0px;top:647px;width:372px;height:1px;background:#d8d8d8;"></div>
<div class="r" style="left:0px;top:648px;width:372px;height:18px;background:#f4f4f4;"></div>
<div class="r" style="left:0px;top:666px;width:372px;height:1px;background:#d8d8d8;"></div>
<div class="r" style="left:0px;top:667px;width:372px;height:18px;background:#ffffff;"></div>
<div class="r" style="left:0px;top:685px;width:372px;height:1px;background:#d8d8d8;"></div>
<div class="r" style="left:0px;top:686px;width:372px;height:18px;background:#f4f4f4;"></div>
<div class="r" style="left:0px;top:704px;width:372px;height:1px;background:#d8d8d8;"></div>
<div class="r" style="left:0px;top:705px;width:372px;height:18px;background:#ffffff;"></div>
<div class="r" style="left:0px;top:723px;width:372px;height:1px;background:#d8d8d8;"></div>
<div class="r" style="left:0px;top:724px;width:372px;height:18px;background:#f4f4f4;"></div>
<div class="r" style="left:0px;top:742px;width:372px;height:1px;background:#d8d8d8;"></div>
<div class="r" style="left:0px;top:743px;width:372px;height:18px;background:#ffffff;"></div>
<div class="r" style="left:0px;top:761px;width:372px;height:1px;background:#d8d8d8;"></div>
<div class="r" style="left:17px;top:97px;width:1px;height:666px;background:#d8d8d8;"></div>
<div class="r" style="left:97px;top:97px;width:1px;height:666px;background:#d8d8d8;"></div>
<div class="r" style="left:177px;top:97px;width:1px;height:666px;background:#d8d8d8;"></div>
<div class="r" style="left:257px;top:97px;width:1px;height:666px;background:#d8d8d8;"></div>
<div class="r" style="left:337px;top:97px;width:1px;height:666px;background:#d8d8d8;"></div>
<div class="t" style="left:17px;top:62px;width:80px;text-align:center;font-size:12px"><span class="k">진</span><span class="k">입</span><span class="k">명</span></div>
<div class="t" style="left:17px;top:80px;width:80px;text-align:center;font-size:12px"><span class="k">청</span><span class="k">산</span><span class="k">명</span></div>
<div class="t" style="left:97px;top:62px;width:80px;text-align:center;font-size:12px"><span class="k">진</span><span class="k">입</span><span class="k">가</span><span class="k">격</span>(pt)</div>
<div class="t" style="left:97px;top:80px;width:80px;text-align:center;font-size:12px"><span class="k">청</span><span class="k">산</span><span class="k">가</span><span class="k">격</span>(pt)</div>
<div class="t" style="left:177px;top:62px;width:80px;text-align:center;font-size:12px"><span class="k">수</span><span class="k">량</span></div>
<div class="t" style="left:177px;top:80px;width:80px;text-align:center;font-size:12px"><span class="k">수</span><span class="k">익</span>(pt)</div>
<div class="t" style="left:257px;top:62px;width:80px;text-align:center;font-size:12px"><span class="k">수</span><span class="k">익</span><span class="k">률</span>(%)</div>
<div class="t" style="left:257px;top:80px;width:80px;text-align:center;font-size:12px"><span class="k">누</span><span class="k">적</span><span class="k">수</span><span class="k">익</span>(pt)</div>
<div class="r" style="left:338px;top:59px;width:34px;height:40px;overflow:hidden"><div class="t" style="left:5px;top:3px;font-size:12px"><span class="k">최</span><span class="k">대</span><span class="k">수</span></div><div class="t" style="left:5px;top:21px;font-size:12px"><span class="k">최</span><span class="k">대</span><span class="k">손</span></div></div>
<div class="r" style="left:0px;top:67px;width:2px;height:1px;background:#202020;"></div>
<div class="r" style="left:0px;top:86px;width:1px;height:1px;background:#4080c0;"></div>
<div class="t" style="left:23px;top:100px;font-size:12px;color:#000;">s</div>
<div class="t" style="right:207px;top:100px;font-size:12px;color:#000;text-align:right;">10,761.50</div>
<div class="t" style="right:127px;top:100px;font-size:12px;color:#000;text-align:right;">2</div>
<div class="t" style="right:47px;top:100px;font-size:12px;color:#0000ff;text-align:right;">-1.72</div>
<div class="t" style="left:23px;top:119px;font-size:11.7px;color:#fff;">ExitShort_#0</div>
<div class="t" style="right:207px;top:119px;font-size:12px;color:#fff;text-align:right;">10,943.25</div>
<div class="t" style="right:127px;top:119px;font-size:12px;color:#fff;text-align:right;">-370.50</div>
<div class="t" style="right:47px;top:119px;font-size:12px;color:#fff;text-align:right;">-370.50</div>
<div class="r" style="left:338px;top:116px;width:34px;height:18px;overflow:hidden"><div class="t" style="left:32px;top:3px;font-size:12px;color:#fff">-</div></div>
<div class="r" style="left:0px;top:762px;width:372px;height:2px;background:#ffffff;"></div>
<div class="r" style="left:17px;top:762px;width:1px;height:2px;background:#d8d8d8;"></div>
<div class="r" style="left:97px;top:762px;width:1px;height:2px;background:#d8d8d8;"></div>
<div class="r" style="left:177px;top:762px;width:1px;height:2px;background:#d8d8d8;"></div>
<div class="r" style="left:257px;top:762px;width:1px;height:2px;background:#d8d8d8;"></div>
<div class="r" style="left:337px;top:762px;width:1px;height:2px;background:#d8d8d8;"></div>
<div class="r" style="left:0px;top:764px;width:372px;height:12px;background:#f0f0f0;background:conic-gradient(#e4e4e4 25%,#fbfbfb 0 50%,#e4e4e4 0 75%,#fbfbfb 0) 0 0/2px 2px"></div>
<div class="r" style="left:0px;top:775px;width:372px;height:1px;background:#6a6a6a;"></div>
<div class="r" style="left:0px;top:764px;width:235px;height:12px;background:#f0f0f0;border-right:2px solid #6a6a6a;border-bottom:2px solid #6a6a6a"></div>
<div class="r" style="left:352px;top:764px;width:20px;height:12px;background:#f0f0f0;border-right:2px solid #6a6a6a;border-bottom:2px solid #6a6a6a;border-left:1px solid #fff;border-top:1px solid #fff"></div>
<svg class="r" style="left:360px;top:767px" width="5" height="6" shape-rendering="crispEdges"><polygon points="1,0.5 4,3 1,5.5" fill="#000"/></svg>
<div class="r" style="left:0px;top:784px;width:379px;height:1.5px;background:#6e6e6e;"></div>
<div class="r" style="left:0px;top:785px;width:32px;height:16px;background:#b4b4b4;border-right:1.5px solid #6e6e6e;border-bottom:1px solid #6e6e6e;border-bottom-right-radius:3px"></div>
<div class="t" style="left:0.5px;top:785.5px;font-size:12px;color:#000;"><span class="k">분</span><span class="k">석</span></div>
<div class="r" style="left:32px;top:785px;width:83.5px;height:16px;background:#b4b4b4;border-right:1.5px solid #6e6e6e;border-bottom:1px solid #6e6e6e;border-bottom-right-radius:3px"></div>
<div class="t" style="left:36.6px;top:785.5px;font-size:12px;color:#000;"><span class="k">수</span><span class="k">익</span><span class="k">손</span><span class="k">실</span><span class="k">거</span><span class="k">래</span></div>
<div class="r" style="left:115.5px;top:785px;width:48.0px;height:16px;background:#b4b4b4;border-right:1.5px solid #6e6e6e;border-bottom:1px solid #6e6e6e;border-bottom-right-radius:3px"></div>
<div class="t" style="left:121px;top:785.5px;font-size:12px;color:#000;"><span class="k">그</span><span class="k">래</span><span class="k">프</span></div>
<div class="r" style="left:163.5px;top:785px;width:48.5px;height:16px;background:#b4b4b4;border-right:1.5px solid #6e6e6e;border-bottom:1px solid #6e6e6e;border-bottom-right-radius:3px"></div>
<div class="t" style="left:174.4px;top:785.5px;font-size:12px;color:#000;"><span class="k">설</span><span class="k">정</span></div></div>
</body></html>
